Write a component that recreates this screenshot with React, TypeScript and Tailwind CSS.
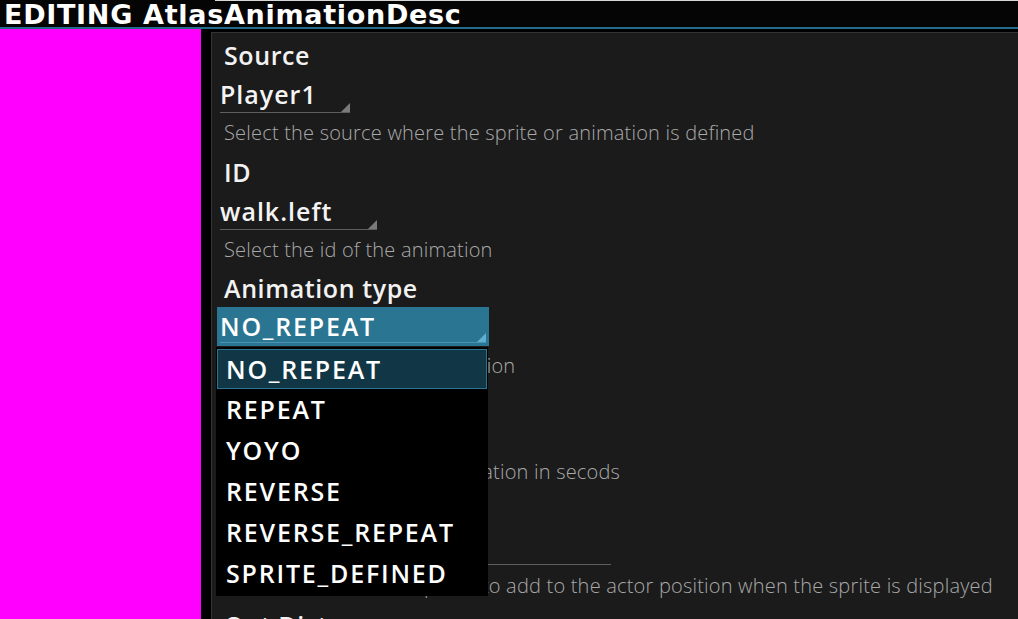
import React from "react";

const options = [
  "NO_REPEAT",
  "REPEAT",
  "YOYO",
  "REVERSE",
  "REVERSE_REPEAT",
  "SPRITE_DEFINED",
];

function Corner({ color }: { color: string }) {
  return (
    <svg width="9" height="9" viewBox="0 0 9 9" className="absolute right-0 bottom-0">
      <polygon points="9,0 9,9 0,9" fill={color} />
    </svg>
  );
}

function Label({ text, h = "h-[40px] leading-[40px]" }: { text: string; h?: string }) {
  return (
    <div className={`pl-[12px] text-[25px] font-semibold tracking-[0.6px] text-[#f2f2f2] ${h}`}>
      {text}
    </div>
  );
}

function Desc({ text, h = "h-[39px] leading-[39px]" }: { text: string; h?: string }) {
  return (
    <div
      className={`pl-[12px] text-[20px] font-light tracking-[0.2px] text-[#a9a9a9] whitespace-nowrap ${h}`}
    >
      {text}
    </div>
  );
}

function Combo({ value, width }: { value: string; width: string }) {
  return (
    <div className="h-[38px] pl-[8px] flex">
      <div
        className={`relative border-b border-[#5e5e5e] text-[25px] font-semibold tracking-[1px] text-[#f4f4f4] leading-[38px] ${width}`}
      >
        {value}
        <Corner color="#7a7a7a" />
      </div>
    </div>
  );
}

export default function App() {
  return (
    <div
      className="w-[1018px] h-[619px] overflow-hidden bg-black flex flex-col"
      style={{ fontFamily: '"Open Sans", "Noto Sans", sans-serif' }}
    >
      <header className="h-[27px] shrink-0 relative bg-[#050505]">
        <div className="absolute top-0 left-[215px] right-0 h-px bg-[#d8d8d8]" />
        <div
          className="pl-[4px] text-[27px] leading-[29px] font-bold text-white tracking-[0.7px] whitespace-nowrap"
          style={{ fontFamily: '"DejaVu Sans", Lato, sans-serif' }}
        >
          EDITING AtlasAnimationDesc
        </div>
      </header>
      <div className="h-[2px] shrink-0 bg-[#236d8a]" />
      <div className="flex flex-1 min-h-0">
        <aside className="w-[201px] shrink-0 bg-[#ff00ff]" />
        <div className="w-[10px] shrink-0" />
        <main className="flex-1 mt-[3px] border-t border-l border-[#333333] bg-[#1b1b1b] relative pt-[2px]">
          <Label text="Source" />
          <Combo value="Player1" width="w-[130px]" />
          <Desc text="Select the source where the sprite or animation is defined" />

          <Label text="ID" />
          <Combo value="walk.left" width="w-[157px]" />
          <Desc text="Select the id of the animation" />

          <Label text="Animation type" h="h-[38px] leading-[38px]" />
          <div className="h-[39px] pl-[5px] flex">
            <div className="relative w-[272px] bg-[#2a7592] text-[25px] font-semibold tracking-[1.8px] text-white leading-[38px] pl-[3px]">
              {options[0]}
              <div className="absolute left-[3px] right-[3px] bottom-[3px] h-px bg-[#4b93b0]" />
              <svg width="9" height="9" viewBox="0 0 9 9" className="absolute right-[3px] bottom-[4px]">
                <polygon points="9,0 9,9 0,9" fill="#5fb0d0" />
              </svg>
            </div>
          </div>
          <Desc text="Select the type of the animation" />

          <Label text="Duration" h="h-[38px] leading-[38px]" />
          <div className="h-[29px] pl-[8px] flex">
            <div className="w-[250px] border-b border-[#5e5e5e] text-[25px] text-[#f4f4f4] leading-[28px]">
              0.1
            </div>
          </div>
          <Desc text="Set the duration of the animation in secods" />

          <Label text="Offset" />
          <div className="h-[34px] pl-[8px] flex">
            <div className="w-[391px] border-b border-[#5e5e5e] text-[25px] text-[#f4f4f4] leading-[33px]">
              0, 0
            </div>
          </div>
          <Desc
            text="Select the distance in pixels to add to the actor position when the sprite is displayed"
            h="h-[40px] leading-[42px]"
          />
          <Label text="Out Dist" />

          <div className="absolute left-[4px] top-[314px] w-[272px] h-[249px] bg-black">
            {options.map((o, i) =>
              i === 0 ? (
                <div
                  key={o}
                  className="mx-px mt-[2px] h-[40px] border border-[#2a7592] bg-[#113746] text-[25px] font-semibold tracking-[1.8px] text-white leading-[38px] pl-[8px]"
                >
                  {o}
                </div>
              ) : (
                <div
                  key={o}
                  className="h-[41px] text-[25px] font-semibold tracking-[1.8px] text-white leading-[41px] pl-[10px]"
                >
                  {o}
                </div>
              )
            )}
          </div>
        </main>
      </div>
    </div>
  );
}
